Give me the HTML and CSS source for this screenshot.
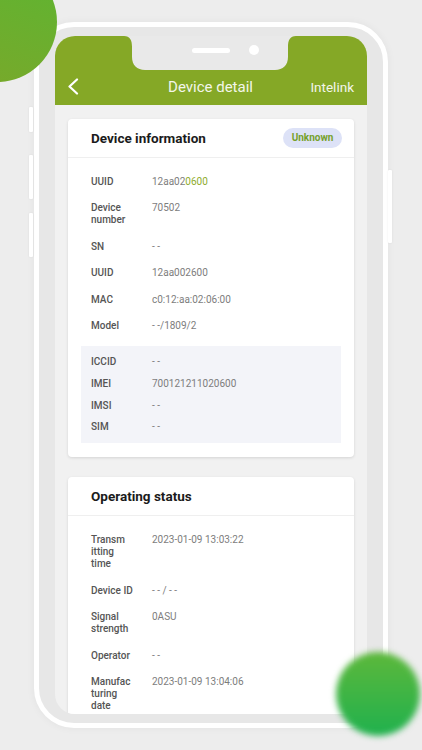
FILE: index.html
```html
<!DOCTYPE html>
<html lang="en">

<head>
    <meta charset="UTF-8">
    <title>Device detail</title>
    <link rel="stylesheet" href="styles.css">
</head>

<body>
    <div class="dot-top"></div>

    <div class="phone">
        <span class="key key-a"></span>
        <span class="key key-b"></span>
        <span class="key key-c"></span>
        <span class="key key-r"></span>

        <div class="screen">
            <svg class="notch" width="172" height="35" viewBox="0 0 172 35">
                <path d="M0 0 H172 C166 0 164 4 164 11 V21 C164 29 159 34 151 34 H21 C13 34 8 29 8 21 V11 C8 4 6 0 0 0 Z" fill="#e9e9e9"/>
                <rect x="68" y="12" width="38" height="5" rx="2.5" fill="#fff"/>
                <circle cx="130" cy="14" r="5" fill="#fff"/>
            </svg>

            <div class="header">
                <div class="nav">
                    <svg class="back" width="12" height="17" viewBox="0 0 12 17">
                        <polyline points="10,1.5 2.5,8.5 10,15.5" fill="none" stroke="#fff" stroke-width="2.2" stroke-linecap="round" stroke-linejoin="round"/>
                    </svg>
                    <span class="nav-title">Device detail</span>
                    <span class="nav-right">Intelink</span>
                </div>
            </div>

            <div class="content">
                <div class="card">
                    <div class="card-head">
                        <span class="card-title">Device information</span>
                        <span class="badge">Unknown</span>
                    </div>
                    <div class="card-body">
                        <div class="row"><span class="label">UUID</span><span class="value">12aa02<em>0600</em></span></div>
                        <div class="row"><span class="label">Device number</span><span class="value">70502</span></div>
                        <div class="row"><span class="label">SN</span><span class="value">- -</span></div>
                        <div class="row"><span class="label">UUID</span><span class="value">12aa002600</span></div>
                        <div class="row"><span class="label">MAC</span><span class="value">c0:12:aa:02:06:00</span></div>
                        <div class="row"><span class="label">Model</span><span class="value">- -/1809/2</span></div>
                        <div class="sim-box">
                            <div class="row"><span class="label">ICCID</span><span class="value">- -</span></div>
                            <div class="row"><span class="label">IMEI</span><span class="value">700121211020600</span></div>
                            <div class="row"><span class="label">IMSI</span><span class="value">- -</span></div>
                            <div class="row"><span class="label">SIM</span><span class="value">- -</span></div>
                        </div>
                    </div>
                </div>

                <div class="card">
                    <div class="card-head">
                        <span class="card-title">Operating status</span>
                    </div>
                    <div class="card-body">
                        <div class="row"><span class="label">Transm<br>itting<br>time</span><span class="value">2023-01-09 13:03:22</span></div>
                        <div class="row"><span class="label">Device ID</span><span class="value">- - / - -</span></div>
                        <div class="row"><span class="label">Signal strength</span><span class="value">0ASU</span></div>
                        <div class="row"><span class="label">Operator</span><span class="value">- -</span></div>
                        <div class="row"><span class="label">Manufac<br>turing<br>date</span><span class="value">2023-01-09 13:04:06</span></div>
                    </div>
                </div>
            </div>
        </div>
    </div>

    <div class="dot-bottom"></div>
</body>

</html>
```

FILE: styles.css
```css
* {
    margin: 0;
    padding: 0;
    box-sizing: border-box;
}

body {
    width: 422px;
    height: 750px;
    overflow: hidden;
    position: relative;
    background: #ededed;
    font-family: Roboto, "Liberation Sans", sans-serif;
    padding: 22px 0 0 34px;
}

/* decorative dots */
.dot-top {
    position: absolute;
    left: -63px;
    top: -38px;
    width: 120px;
    height: 120px;
    border-radius: 50%;
    background: linear-gradient(200deg, #5db532, #7aa82a);
    z-index: 5;
}

.dot-bottom {
    position: absolute;
    left: 336px;
    top: 652px;
    width: 84px;
    height: 84px;
    border-radius: 50%;
    background: linear-gradient(180deg, #5db83b, #20b14e);
    filter: blur(3px);
    z-index: 5;
}

/* phone frame */
.phone {
    position: relative;
    width: 354px;
    height: 706px;
    border: 5px solid #fff;
    border-radius: 40px;
    background: #e7e7e7;
    padding: 9px 16px;
    box-shadow: 0 0 8px rgba(0, 0, 0, 0.05);
}

.key {
    position: absolute;
    width: 4px;
    background: #fff;
    border-radius: 1px;
    box-shadow: 0 0 2px rgba(0, 0, 0, 0.08);
}

.key-a { left: -10px; top: 80px; height: 25px; }
.key-b { left: -10px; top: 128px; height: 44px; }
.key-c { left: -10px; top: 186px; height: 44px; }
.key-r { right: -9px; top: 143px; height: 73px; }

.screen {
    position: relative;
    height: 100%;
    border-radius: 20px;
    overflow: hidden;
    background: #f1f1f1;
}

.notch {
    position: absolute;
    left: 69px;
    top: 0;
    display: block;
}

/* header */
.header {
    background: #85a826;
    padding-top: 32px;
}

.nav {
    height: 37px;
    display: grid;
    grid-template-columns: 1fr auto 1fr;
    align-items: center;
    padding: 0 13px 0 12px;
    color: #f3f6ea;
}

.back {
    display: block;
}

.nav-title {
    font-size: 15px;
}

.nav-right {
    justify-self: end;
    font-size: 13.5px;
}

/* cards */
.content {
    display: flex;
    flex-direction: column;
    gap: 20px;
    padding: 14px 13px;
}

.card {
    background: #fff;
    border-radius: 4px;
    box-shadow: 0 1px 3px rgba(0, 0, 0, 0.12);
}

.card-head {
    height: 39px;
    display: flex;
    align-items: center;
    justify-content: space-between;
    padding: 0 12px 0 23px;
    border-bottom: 1px solid #efefef;
}

.card-title {
    font-size: 13.5px;
    font-weight: bold;
    color: #1b1b1b;
}

.badge {
    width: 59px;
    height: 20px;
    line-height: 20px;
    border-radius: 10px;
    background: #dde2f7;
    color: #76a02c;
    font-size: 10px;
    font-weight: bold;
    text-align: center;
}

.card-body {
    display: flex;
    flex-direction: column;
    gap: 14.4px;
    padding: 18px 13px 14px;
}

.row {
    display: flex;
    padding-left: 10px;
    font-size: 10px;
    line-height: 12px;
}

.label {
    flex: 0 0 61px;
    padding-right: 13px;
    font-weight: 500;
    color: #555;
}

.value {
    color: #7d7d7d;
}

.value em {
    font-style: normal;
    color: #8eab2c;
}

.sim-box {
    display: flex;
    flex-direction: column;
    gap: 9.7px;
    padding: 10px 0;
    background: #f3f4f9;
}
```
